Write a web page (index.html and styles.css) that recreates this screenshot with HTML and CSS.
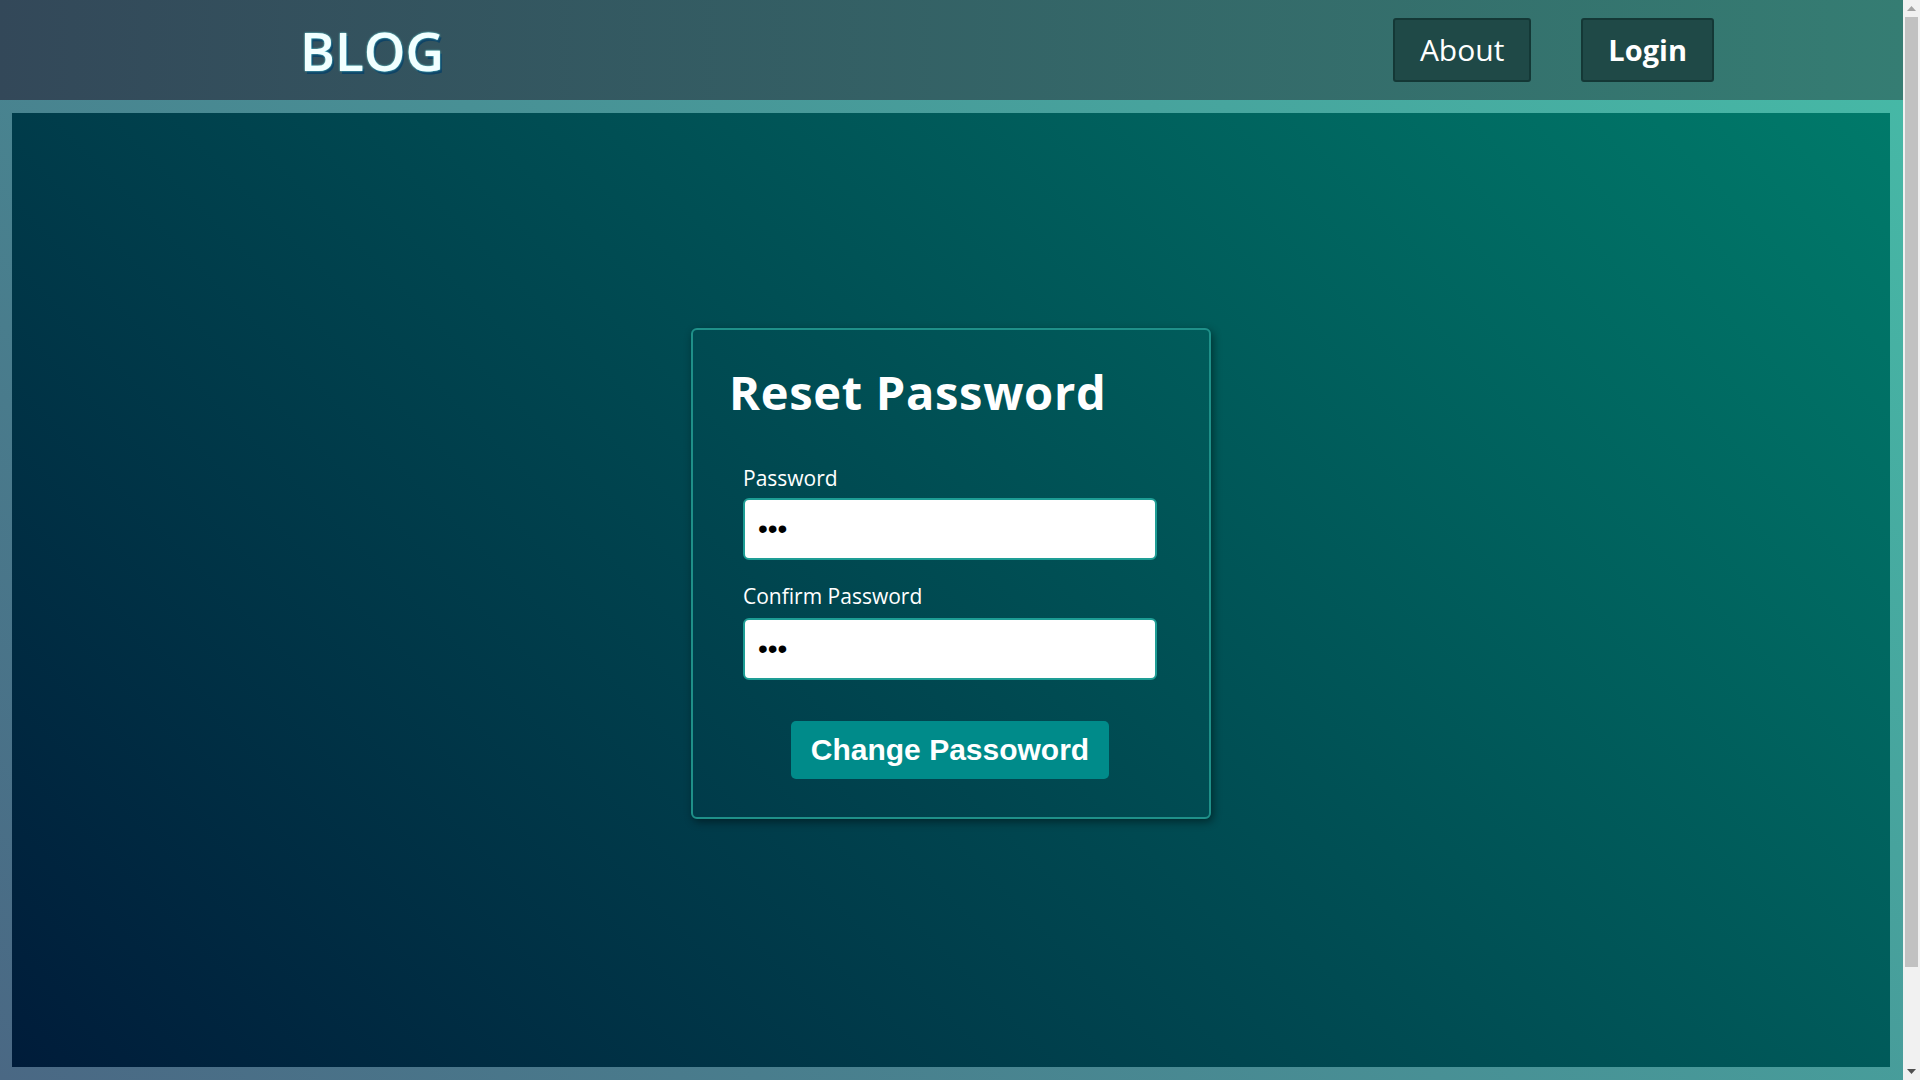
FILE: index.html
```html
<!DOCTYPE html>
<html lang="en">
<head>
<meta charset="utf-8">
<title>Reset Password</title>
<link rel="stylesheet" href="styles.css">
</head>
<body>
<div class="page">
  <header class="topbar">
    <div class="logo">BLOG</div>
    <nav class="nav">
      <a class="nav-btn" href="#">About</a>
      <a class="nav-btn nav-btn-strong" href="#">Login</a>
    </nav>
  </header>
  <main class="stage">
    <section class="card">
      <h1 class="card-title">Reset Password</h1>
      <form class="form">
        <label class="field-label" for="pw">Password</label>
        <input class="field-input" id="pw" type="password" value="abc">
        <label class="field-label field-label-second" for="pw2">Confirm Password</label>
        <input class="field-input" id="pw2" type="password" value="abc">
        <div class="actions">
          <button class="submit" type="button">Change Passoword</button>
        </div>
      </form>
    </section>
  </main>
</div>
<div class="scrollbar" aria-hidden="true">
  <div class="sb-arrow">
    <svg width="9" height="5" viewBox="0 0 9 5"><polygon points="0,5 4.5,0 9,5" fill="#a3a3a3"/></svg>
  </div>
  <div class="sb-track"><div class="sb-thumb"></div></div>
  <div class="sb-arrow">
    <svg width="9" height="5" viewBox="0 0 9 5"><polygon points="0,0 9,0 4.5,5" fill="#505050"/></svg>
  </div>
</div>
</body>
</html>
```

FILE: styles.css
```css
* { box-sizing: border-box; }

html, body {
  margin: 0;
  padding: 0;
}

body {
  display: flex;
  height: 100vh;
  overflow: hidden;
  background: #3f6f7c;
  font-family: "Open Sans", "Noto Sans", sans-serif;
  color: #ffffff;
}

.page {
  flex: 1;
  min-width: 0;
}

.topbar {
  height: 100px;
  display: flex;
  align-items: center;
  justify-content: space-between;
  padding: 0 189px 0 300px;
  background: linear-gradient(to right, #334859, #357d73);
}

.logo {
  font-size: 53px;
  line-height: 1;
  font-weight: 600;
  color: #f2ffff;
  text-shadow: 0 0 2px #7fffff, 2px 3px 0 #0f4466;
}

.nav {
  display: flex;
  gap: 50px;
}

.nav-btn {
  display: block;
  height: 64px;
  line-height: 60px;
  padding: 0 25px;
  font-size: 30px;
  color: #ffffff;
  text-decoration: none;
  background: #1f4947;
  border: 2px solid #143836;
  border-radius: 3px;
}

.nav-btn-strong {
  font-weight: 700;
  font-size: 29px;
}

.stage {
  height: 980px;
  border-style: solid;
  border-color: transparent;
  border-width: 13px 13px 13px 12px;
  background:
    linear-gradient(45deg, #001c3a, #007a6a) padding-box,
    linear-gradient(45deg, #4a6884, #46b8a6) border-box;
  padding-top: 215px;
}

.card {
  width: 520px;
  margin: 0 auto;
  border: 2px solid #1f9089;
  border-radius: 6px;
  box-shadow: 2px 3px 8px rgba(0, 0, 0, 0.45);
  padding: 35px 39px 38px 36px;
}

.card-title {
  margin: 0 0 46px;
  font-size: 47px;
  line-height: 55px;
  letter-spacing: 0.7px;
  font-weight: 700;
  color: #ffffff;
}

.form {
  display: flex;
  flex-direction: column;
  padding: 0 13px 0 14px;
}

.field-label {
  font-size: 21px;
  line-height: 1.2;
  color: #ffffff;
  margin-bottom: 7px;
}

.field-label-second {
  margin-top: 24px;
  margin-bottom: 9px;
}

.field-input {
  width: 100%;
  height: 62px;
  border: 2px solid #1e9d95;
  border-radius: 6px;
  background: #ffffff;
  padding: 0 13px;
  font-family: "Liberation Sans", Arial, sans-serif;
  font-size: 28px;
  color: #000000;
  outline: none;
}

.actions {
  display: flex;
  justify-content: center;
  margin-top: 41px;
}

.submit {
  font-family: "Liberation Sans", Arial, sans-serif;
  font-weight: 700;
  font-size: 30px;
  line-height: 34px;
  padding: 12px 20px;
  color: #ffffff;
  background: #008b8a;
  border: none;
  border-radius: 5px;
}

.scrollbar {
  width: 17px;
  flex-shrink: 0;
  height: 100vh;
  display: flex;
  flex-direction: column;
  background: #f1f1f1;
}

.sb-arrow {
  height: 17px;
  display: flex;
  align-items: center;
  justify-content: center;
}

.sb-track {
  flex: 1;
  padding: 0 2px;
}

.sb-thumb {
  height: 950px;
  background: #c1c1c1;
}
```
